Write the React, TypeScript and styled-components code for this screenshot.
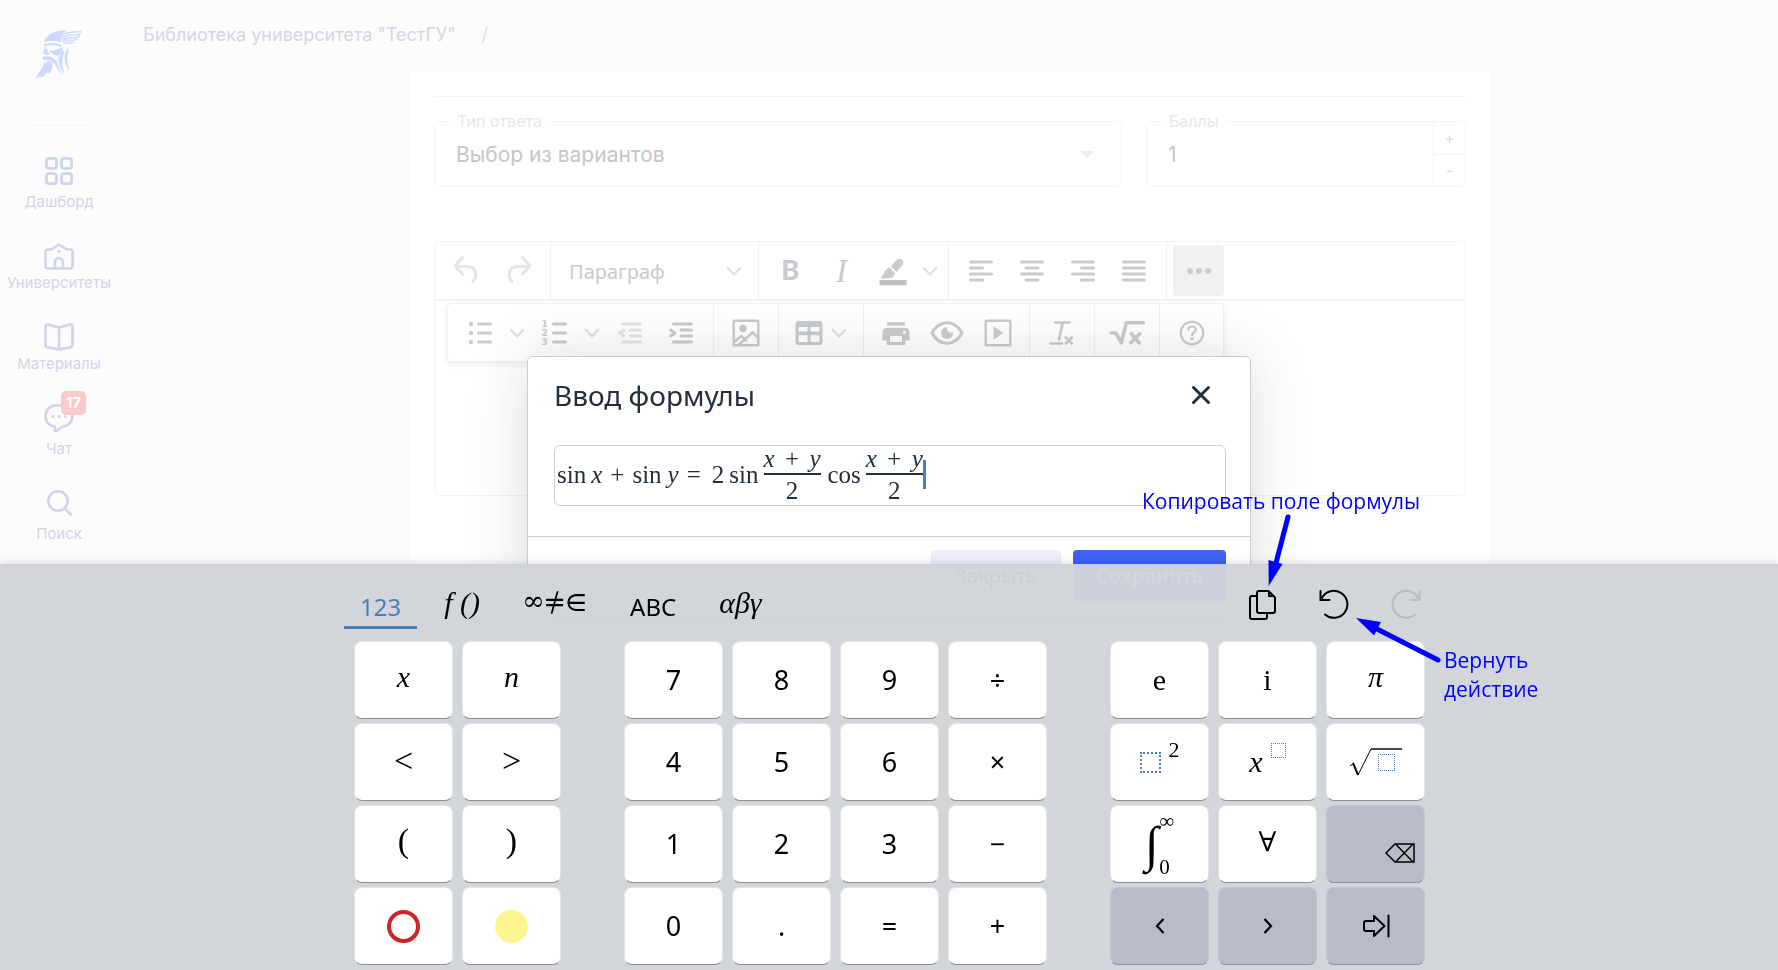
import React from 'react';
import styled, { createGlobalStyle, css } from 'styled-components';

const UI = `'Inter', 'Noto Sans', sans-serif`;
const TEXT = `'Noto Sans', 'Open Sans', sans-serif`;
const MATH = `'Liberation Serif', 'DejaVu Serif', serif`;

const Global = createGlobalStyle`
  *, *::before, *::after { box-sizing: border-box; }
  body { margin: 0; background: #fcfcfc; overflow: hidden; }
  button, select, input { font: inherit; color: inherit; border: 0; padding: 0; margin: 0; background: none; border-radius: 0; outline: none; }
`;

/* ---------- page ---------- */

const Shell = styled.div`
  display: flex;
  min-height: 100vh;
  font-family: ${UI};
`;

const Sidebar = styled.nav`
  flex: none;
  width: 118px;
  display: flex;
  flex-direction: column;
  align-items: center;
  padding-top: 29px;
`;

const LogoLink = styled.a`
  display: block;
  height: 50px;
`;

const SideRule = styled.div`
  width: 60px;
  height: 1px;
  margin: 46px 0 31px;
  background: #f4f5f7;
`;

const NavList = styled.div`
  display: flex;
  flex-direction: column;
  align-items: center;
  gap: 30px;
`;

const NavItem = styled.a<{ $tight?: boolean }>`
  position: relative;
  display: flex;
  flex-direction: column;
  align-items: center;
  gap: ${p => (p.$tight ? 3 : 7)}px;
  color: #ced5ea;
  font-size: 15px;
  line-height: 20px;
  text-decoration: none;
  svg { display: block; }
`;

const Badge = styled.span`
  position: absolute;
  top: -13px;
  left: calc(50% + 2px);
  width: 25px;
  height: 24px;
  border-radius: 5px;
  background: #fbcac8;
  color: #fff;
  font-size: 15px;
  font-weight: 700;
  line-height: 24px;
  text-align: center;
`;

const Main = styled.main`
  flex: 1;
  min-width: 0;
  display: flex;
  flex-direction: column;
  padding-left: 4px;
`;

const Crumbs = styled.div`
  display: flex;
  align-items: center;
  gap: 26px;
  height: 72px;
  padding: 0 0 4px 21px;
  font-size: 18px;
  color: #dddfe4;
  a { color: #cfd6ea; text-decoration: none; }
`;

const Panel = styled.section`
  flex: 1;
  width: 100%;
  max-width: 1082px;
  margin: 0 auto;
  padding: 24px;
  background: #fff;
  border: solid #fafafa;
  border-width: 0 1px;
`;

const PanelRule = styled.div`
  height: 1px;
  background: #f5f5f6;
`;

const FieldRow = styled.div`
  display: flex;
  gap: 24px;
  margin: 16px 0 54px;
`;

const Field = styled.fieldset<{ $fixed?: boolean }>`
  flex: ${p => (p.$fixed ? '0 0 320px' : '1')};
  min-width: 0;
  height: 74px;
  display: flex;
  margin: 0;
  padding: 0;
  border: 1px solid #f5f5f7;
  border-radius: 6px;
  color: #c6c6c8;
  font-size: 21px;
`;

const Legend = styled.legend`
  margin-left: 16px;
  padding: 0 8px 0 6px;
  color: #e7e7eb;
  font-size: 16px;
  line-height: 16px;
`;

const FieldInner = styled.div`
  flex: 1;
  display: flex;
  align-items: flex-start;
  min-width: 0;
`;

const FieldSelect = styled.select`
  flex: 1;
  height: 51px;
  padding-left: 21px;
  appearance: none;
`;

const FieldInput = styled.input`
  flex: 1;
  min-width: 0;
  height: 51px;
  padding-left: 21px;
`;

const DropMark = styled.span`
  margin: 22px 27px 0 0;
  border: 7px solid transparent;
  border-top: 7px solid #ececf1;
  border-bottom: 0;
`;

const Stepper = styled.div`
  display: flex;
  flex-direction: column;
  align-self: stretch;
  width: 32px;
  margin-top: -7px;
  border-left: 1px solid #f3f3f5;
  button { flex: 1; font-size: 16px; line-height: 20px; color: #dcdcdf; }
  button + button { border-top: 1px solid #f3f3f5; }
`;

/* ---------- editor ---------- */

const Editor = styled.div`
  height: 255px;
  border: 1px solid #f4f4f5;
  border-radius: 6px;
`;

const Toolbar = styled.div`
  display: flex;
  height: 59px;
  border-bottom: 2px solid #f1f2f2;
`;

const MoreToolbar = styled.div`
  display: flex;
  width: max-content;
  height: 59px;
  margin: 2px 0 0 12px;
  border: 1px solid #f1f1f2;
  border-radius: 4px;
  background: #fff;
  box-shadow: 0 3px 6px rgba(34, 47, 62, 0.08);
`;

const Group = styled.div<{ $wide?: boolean }>`
  display: flex;
  align-items: center;
  padding: 0 ${p => (p.$wide ? 7 : 6)}px 0 6px;
  border-right: 1px solid #eff0f1;
  &:first-child { padding: 0 7px 0 6px; }
  &:last-child { border-right: 0; }
`;

const Tool = styled.button<{ $faint?: boolean; $on?: boolean; $menu?: boolean }>`
  width: ${p => (p.$menu ? 72 : 51)}px;
  height: 51px;
  display: flex;
  align-items: center;
  justify-content: center;
  border-radius: 4px;
  color: ${p => (p.$faint ? '#e3e5e7' : '#c8cbcf')};
  ${p => p.$on && css`background: #f0f1f3;`}
  svg { display: block; flex: none; }
`;

const Drop = styled.button`
  width: 24px;
  height: 51px;
  display: flex;
  align-items: center;
  justify-content: center;
`;

const BoldMark = styled.b`
  font: 700 28px/36px 'Roboto', ${UI};
`;

const ItalicMark = styled.i`
  font: italic 400 33px/36px ${MATH};
`;

const BlockSelect = styled.label`
  display: flex;
  align-items: center;
  width: 195px;
  height: 51px;
  padding: 0 6px 0 12px;
  color: #c8cbcf;
  font: 400 20px/28px ${TEXT};
  select { flex: 1; min-width: 0; height: 51px; padding-top: 2px; appearance: none; }
`;

/* ---------- dialog ---------- */

const Backdrop = styled.div`
  position: fixed;
  inset: 0;
  display: flex;
  align-items: center;
  justify-content: center;
`;

const Dialog = styled.div`
  width: 724px;
  max-width: 95vw;
  border: 1px solid #ccc;
  border-radius: 5px;
  background: #fff;
  color: #222f3e;
  font-family: ${TEXT};
  box-shadow: 0 24px 24px -15px rgba(34, 47, 62, 0.15), 0 0 60px 1px rgba(34, 47, 62, 0.15);
`;

const DialogHead = styled.div`
  display: flex;
  align-items: center;
  justify-content: space-between;
  height: 88px;
  padding: 0 24px 12px 26px;
  h1 { margin: 0; font-size: 28px; font-weight: 400; line-height: 40px; }
`;

const CloseButton = styled.button`
  width: 51px;
  height: 51px;
  display: flex;
  align-items: center;
  justify-content: center;
`;

const FormulaField = styled.div`
  display: flex;
  align-items: center;
  height: 61px;
  margin: 0 24px 30px 26px;
  padding: 0 2px 2px;
  border: 1px solid #ccc;
  border-radius: 6px;
  font: 400 25px/28px ${MATH};
`;

const Term = styled.span<{ $before?: number }>`
  margin-left: ${p => p.$before ?? 0}px;
`;

const Fraction = styled.span`
  display: flex;
  flex-direction: column;
  width: 57px;
  margin-left: 5px;
`;

const Numerator = styled.span`
  display: flex;
  justify-content: space-between;
  height: 29px;
  line-height: 26px;
  border-bottom: 2px solid currentColor;
`;

const Denominator = styled.span`
  height: 28px;
  line-height: 32px;
  text-align: center;
`;

const Caret = styled.span`
  width: 3px;
  height: 29px;
  background: #4a7dbd;
`;

const DialogFoot = styled.div`
  display: flex;
  justify-content: flex-end;
  gap: 12px;
  padding: 13px 24px 12px;
  border-top: 1px solid #ccc;
`;

const FootButton = styled.button<{ $primary?: boolean }>`
  width: ${p => (p.$primary ? 153 : 130)}px;
  height: 51px;
  border-radius: 4px;
  font-size: 20px;
  font-weight: ${p => (p.$primary ? 600 : 400)};
  color: ${p => (p.$primary ? '#fff' : '#222f3e')};
  background: ${p => (p.$primary ? '#3e62f5' : '#ebf0fc')};
`;

/* ---------- math keyboard ---------- */

const Keyboard = styled.div`
  position: fixed;
  left: 0;
  right: 0;
  bottom: 0;
  padding-bottom: 5px;
  border-top: 1px solid #cbcdd0;
  background: rgba(208, 211, 217, 0.965);
  box-shadow: 0 0 10px rgba(0, 0, 0, 0.16);
  color: #000;
`;

const KeyboardBody = styled.div`
  position: relative;
  width: 1090px;
  margin: 0 auto;
`;

const KeyboardBar = styled.div`
  display: flex;
  justify-content: space-between;
  height: 64px;
  margin-bottom: 12px;
`;

const Tabs = styled.div`
  display: flex;
  gap: 11px;
`;

const Tab = styled.button<{ $active?: boolean; $math?: boolean }>`
  padding: ${p => (p.$math ? 20 : 24)}px 16px 0;
  display: flex;
  align-items: flex-start;
  justify-content: center;
  white-space: nowrap;
  font: ${p => (p.$math ? `italic 30px/36px ${MATH}` : `400 24px/36px ${TEXT}`)};
  color: ${p => (p.$active ? '#4a7dbd' : '#000')};
  border-bottom: 3px solid ${p => (p.$active ? '#4a7dbd' : 'transparent')};
`;

const Actions = styled.div`
  display: flex;
  gap: 42px;
  padding: 24px 13px 0 0;
`;

const Action = styled.button`
  width: 30px;
  height: 32px;
  &:disabled { color: #b9bcc1; }
  svg { display: block; }
`;

const Pad = styled.div`
  display: flex;
  gap: 63px;
  padding: 0 10px;
`;

const Block = styled.div<{ $cols: number }>`
  display: grid;
  grid-template-columns: repeat(${p => p.$cols}, 99px);
  grid-auto-rows: 78px;
  gap: 4px 9px;
`;

const Key = styled.button<{ $kind?: 'digit' | 'math' | 'action' }>`
  display: flex;
  align-items: center;
  justify-content: center;
  border: 1px solid #e4e6e9;
  border-bottom-color: #8b8d91;
  border-radius: 8px;
  background: #fff;
  font: ${p => (p.$kind === 'digit' ? `400 27px/40px ${TEXT}` : `400 30px/40px ${MATH}`)};
  ${p => p.$kind === 'math' && css`font-style: italic; padding-bottom: 6px;`}
  ${p => p.$kind === 'action' && css`background: #b8bcc8; border-color: #c0c4ce; border-bottom-color: #8e9199;`}
  svg { display: block; }
`;

const CornerKey = styled(Key)`
  align-items: flex-end;
  justify-content: flex-end;
  padding: 0 9px 19px;
`;

const Large = styled.span<{ $up?: boolean }>`
  padding-bottom: ${p => (p.$up ? 6 : 2)}px;
  font-size: 34px;
`;

const Symbol = styled.span`
  font: 400 27px/36px 'DejaVu Math TeX Gyre', 'DejaVu Sans', sans-serif;
`;

const Ring = styled.span`
  width: 33px;
  height: 33px;
  border: 4px solid #cc2428;
  border-radius: 50%;
`;

const Disc = styled.span`
  width: 33px;
  height: 33px;
  border-radius: 50%;
  background: #fff590;
`;

const Slot = styled.span<{ $size: number }>`
  display: block;
  width: ${p => p.$size}px;
  height: ${p => p.$size}px;
  border: ${p => (p.$size > 20 ? 2 : 1)}px dotted #4a7dbd;
`;

const Power = styled.span`
  display: flex;
  align-items: center;
  gap: 8px;
`;

const Raised = styled.span`
  padding-bottom: 24px;
  font-size: 22px;
  line-height: 20px;
`;

const Integral = styled.span`
  display: flex;
  align-items: center;
  font-size: 50px;
  line-height: 60px;
`;

const Limits = styled.span`
  display: flex;
  flex-direction: column;
  justify-content: space-between;
  height: 66px;
  margin-left: 1px;
  font-size: 21px;
  line-height: 20px;
  text-align: left;
`;

const Root = styled.span`
  position: relative;
  display: block;
  width: 52px;
  height: 28px;
  > span { position: absolute; left: 28px; top: 6px; }
`;

/* ---------- call-outs over the screen ---------- */

const Note = styled.p<{ $x: number; $y: number }>`
  position: absolute;
  left: ${p => p.$x}px;
  top: ${p => p.$y}px;
  margin: 0;
  color: #0000f5;
  font: 400 21px/29px 'Open Sans', ${TEXT};
  white-space: nowrap;
`;

const Arrows = styled.svg`
  position: absolute;
  left: 912px;
  top: -56px;
  pointer-events: none;
`;

/* ---------- icons ---------- */

const Icon = ({ children, size = 36, w = 2 }: { children: React.ReactNode; size?: number; w?: number }) => (
  <svg width={size} height={size} viewBox="0 0 24 24" fill="none" stroke="currentColor" strokeWidth={w} strokeLinecap="round" strokeLinejoin="round" aria-hidden="true">
    {children}
  </svg>
);

const Lines = ({ d }: { d: string }) => <Icon w={2}><path d={d} /></Icon>;

const Chevron = () => (
  <svg width="24" height="24" viewBox="0 0 24 24" fill="none" stroke="#dfe1e4" strokeWidth="2.4" strokeLinecap="round" strokeLinejoin="round" aria-hidden="true">
    <path d="M6 9l6 6.500L18 9" />
  </svg>
);

const Logo = () => (
  <svg width="48" height="50" viewBox="107 87 144 150" fill="#cdd8fd" aria-hidden="true">
    <path d="M134 127C140 103 166 90 207 91C190 97 183 110 185 127C168 121 150 122 134 127Z" />
    <path d="M134 133C150 127 172 127 187 135L186 142C168 134 151 134 134 139Z" />
    <path d="M136 139L134 152L131 160L138 164L146 166L152 161L144 155L146 148L141 147Z" />
    <path d="M149 151L164 152L190 142L187 158L177 169L160 163Z" />
    <path d="M130 170C150 165 168 172 175 191C179 205 182 214 186 224C172 204 164 184 148 180C140 178 132 182 130 177Z" />
    <path d="M134 187L139 192L143 183C152 182 161 188 160 200C158 210 154 217 151 223L146 216L131 230L109 233C119 217 131 205 134 187Z" />
    <path d="M191 150C173 172 179 204 196 223C188 199 186 178 196 156ZM206 144C190 164 194 194 210 212C203 190 202 170 207 152Z" />
    <path d="M174 172C176 190 181 210 189 237C187 210 182 192 181 168Z" opacity=".4" />
    <path fill="none" stroke="#cdd8fd" strokeWidth="4" strokeLinecap="round" d="M201 131C186 128 185 104 203 99C220 93 234 99 247 93M196 120C194 106 210 104 220 105C231 107 240 103 246 99M200 126C199 113 210 112 219 113C229 115 236 112 241 107M207 130C203 122 211 120 217 121C224 122 229 120 233 116M208 130L224 127" />
  </svg>
);

const MenuDrop = ({ label }: { label: string }) => <Drop aria-label={label}><Chevron /></Drop>;

const Grid4 = () => (
  <Icon size={28} w={2.4}>
    <rect x="1.200" y="1.200" width="8.600" height="8.600" rx="2" /><rect x="14.200" y="1.200" width="8.600" height="8.600" rx="2" />
    <rect x="1.200" y="14.200" width="8.600" height="8.600" rx="2" /><rect x="14.200" y="14.200" width="8.600" height="8.600" rx="2" />
  </Icon>
);

const SideSvg = ({ children }: { children: React.ReactNode }) => (
  <svg width="30" height="28" viewBox="0 0 30 28" fill="none" stroke="currentColor" strokeWidth="2.6" strokeLinecap="round" strokeLinejoin="round" aria-hidden="true">{children}</svg>
);

const House = () => (
  <SideSvg>
    <path d="M15 2.500L23 7.500H26C27.500 7.500 28.500 8.500 28.500 10V24C28.500 25.500 27.500 26.500 26 26.500H4C2.500 26.500 1.500 25.500 1.500 24V10C1.500 8.500 2.500 7.500 4 7.500H7Z" />
    <path d="M11 26V20C11 15 19 15 19 20V26M14.500 9.500H15.500" />
  </SideSvg>
);

const Book = () => (
  <SideSvg>
    <path d="M15 4.500L4 1.500C2.500 1.300 1.500 2 1.500 3.500V22C1.500 23.500 2 24 3.500 24.300L15 26.500L26.500 24.300C28 24 28.500 23.500 28.500 22V3.500C28.500 2 27.500 1.300 26 1.500ZM15 4.500V26" />
  </SideSvg>
);

const Chat = () => (
  <SideSvg>
    <path d="M12 1.500H18C24 1.500 28.500 6 28.500 12C28.500 18 24 22 19 22.500L11 28V22.500C5.500 22 1.500 18 1.500 12C1.500 6 6 1.500 12 1.500Z" />
    <path d="M8.800 12.500h.1M15 12.500h.1M21.200 12.500h.1" strokeWidth="3" />
  </SideSvg>
);

const Search = () => (
  <SideSvg><circle cx="14" cy="12" r="9.700" /><path d="M21 19.500L26.500 25.500" /></SideSvg>
);

const Undo = () => <Icon><path d="M9 3L4 8.500L9 14M4.500 9H12C18 9 19.500 15 16 19" /></Icon>;
const Redo = () => <Icon><path d="M15 3L20 8.500L15 14M19.500 9H12C6 9 4.500 15 8 19" /></Icon>;

const Dot = ({ y }: { y: number }) => <circle cx="6" cy={y} r="1.500" fill="currentColor" stroke="none" />;

const ListDigits = styled.g`
  font: 700 6px 'DejaVu Sans', sans-serif;
  fill: currentColor;
  stroke: none;
`;

const XPlusY = () => (
  <Fraction>
    <Numerator><i>x</i><span>+</span><i>y</i></Numerator>
    <Denominator>2</Denominator>
  </Fraction>
);

const nav = [
  { label: 'Дашборд', icon: <Grid4 /> },
  { label: 'Университеты', icon: <House />, tight: true },
  { label: 'Материалы', icon: <Book />, tight: true },
  { label: 'Чат', icon: <Chat />, badge: '17' },
  { label: 'Поиск', icon: <Search /> },
];

const digits = ['7', '8', '9', '÷', '4', '5', '6', '×', '1', '2', '3', '−', '0', '.', '=', '+'];

export default function App() {
  return (
    <>
      <Global />
      <Shell>
        <Sidebar>
          <LogoLink href="#" aria-label="Главная"><Logo /></LogoLink>
          <SideRule />
          <NavList>
            {nav.map(n => (
              <NavItem key={n.label} href="#" $tight={n.tight}>
                {n.icon}
                {n.badge && <Badge>{n.badge}</Badge>}
                <span>{n.label}</span>
              </NavItem>
            ))}
          </NavList>
        </Sidebar>
        <Main>
          <Crumbs><a href="#">Библиотека университета "ТестГУ"</a><span>/</span></Crumbs>
          <Panel>
            <PanelRule />
            <FieldRow>
              <Field>
                <Legend><label htmlFor="kind">Тип ответа</label></Legend>
                <FieldInner>
                  <FieldSelect id="kind"><option>Выбор из вариантов</option></FieldSelect>
                  <DropMark />
                </FieldInner>
              </Field>
              <Field $fixed>
                <Legend><label htmlFor="score">Баллы</label></Legend>
                <FieldInner>
                  <FieldInput id="score" defaultValue="1" />
                  <Stepper><button aria-label="Больше">+</button><button aria-label="Меньше">-</button></Stepper>
                </FieldInner>
              </Field>
            </FieldRow>
            <Editor>
              <Toolbar>
                <Group>
                  <Tool $faint aria-label="Отменить"><Undo /></Tool>
                  <Tool $faint aria-label="Повторить"><Redo /></Tool>
                </Group>
                <Group>
                  <BlockSelect>
                    <select aria-label="Формат"><option>Параграф</option></select>
                    <Chevron />
                  </BlockSelect>
                </Group>
                <Group>
                  <Tool aria-label="Полужирный"><BoldMark>B</BoldMark></Tool>
                  <Tool aria-label="Курсив"><ItalicMark>I</ItalicMark></Tool>
                  <Tool aria-label="Цвет фона">
                    <Icon>
                      <path stroke="none" fill="#bfbfbf" d="M3 18h18v3.500H3z" />
                      <path stroke="none" fill="currentColor" d="M4 17L6 13.500C6.200 11.800 7 11.500 9.500 9.500L13.500 13.500L11.500 16.500L8.500 17ZM10.500 8.800L14.500 4.500C17 2.500 20 5 18.300 8L14.300 12.600Z" />
                    </Icon>
                  </Tool>
                  <MenuDrop label="Выбор цвета" />
                </Group>
                <Group $wide>
                  <Tool aria-label="По левому краю"><Lines d="M5 6h14M5 10h8M5 14h14M5 18h8" /></Tool>
                  <Tool aria-label="По центру"><Lines d="M5 6h14M8 10h8M5 14h14M8 18h8" /></Tool>
                  <Tool aria-label="По правому краю"><Lines d="M5 6h14M11 10h8M5 14h14M11 18h8" /></Tool>
                  <Tool aria-label="По ширине"><Lines d="M5 6h14M5 10h14M5 14h14M5 18h14" /></Tool>
                </Group>
                <Group>
                  <Tool $on aria-label="Ещё">
                    <Icon><g stroke="none" fill="currentColor"><circle cx="6" cy="12" r="2" /><circle cx="12" cy="12" r="2" /><circle cx="18" cy="12" r="2" /></g></Icon>
                  </Tool>
                </Group>
              </Toolbar>
              <MoreToolbar>
                <Group>
                  <Tool aria-label="Маркированный список"><Icon><Dot y={6} /><Dot y={12} /><Dot y={18} /><path d="M11 6h8M11 12h8M11 18h8" /></Icon></Tool>
                  <MenuDrop label="Вид маркеров" />
                  <Tool aria-label="Нумерованный список">
                    <Icon>
                      <path d="M11 6h8M11 12h8M11 18h8" />
                      <ListDigits><text x="3" y="8">1</text><text x="3" y="14">2</text><text x="3" y="20">3</text></ListDigits>
                    </Icon>
                  </Tool>
                  <MenuDrop label="Вид нумерации" />
                  <Tool $faint aria-label="Уменьшить отступ"><Lines d="M7 6h12M12 10h7M12 14h7M7 18h12M8 10L5 12l3 2" /></Tool>
                  <Tool aria-label="Увеличить отступ"><Lines d="M7 6h12M12 10h7M12 14h7M7 18h12M5 10l3 2-3 2" /></Tool>
                </Group>
                <Group $wide>
                  <Tool aria-label="Изображение">
                    <Icon w={1.6}><rect x="3.800" y="3.800" width="16.400" height="16.400" rx=".3" /><circle cx="10" cy="9" r="1.700" fill="currentColor" /><path d="M4 18l5-4 3 3M7 20l9.500-8.500 3.500 4" /></Icon>
                  </Tool>
                </Group>
                <Group>
                  <Tool $menu aria-label="Таблица">
                    <Icon><path stroke="none" fill="currentColor" fillRule="evenodd" d="M5 4h14a2 2 0 0 1 2 2v12a2 2 0 0 1-2 2H5a2 2 0 0 1-2-2V6a2 2 0 0 1 2-2ZM5 8v3h6V8ZM13 8v3h6V8ZM5 13.500V18h6v-4.500ZM13 13.500V18h6v-4.500Z" /></Icon>
                    <Chevron />
                  </Tool>
                </Group>
                <Group>
                  <Tool aria-label="Печать">
                    <Icon><path stroke="none" fill="currentColor" fillRule="evenodd" d="M6 4.800h12V7H6ZM6 8.500h12a3 3 0 0 1 3 3V17h-3v3H6v-3H3v-5.500a3 3 0 0 1 3-3ZM8 14v4h8v-4ZM17.500 10.500a1 1 0 1 0 .1 2.200a1 1 0 1 0-.1-2.200Z" /></Icon>
                  </Tool>
                  <Tool aria-label="Просмотр">
                    <Icon><path d="M2 12C7 2.800 17 2.800 22 12C17 21.200 7 21.200 2 12Z" /><path stroke="none" fill="currentColor" d="M12 8C11.500 10.500 13.500 12.300 16 11.500A4 4 0 1 1 12 8Z" /></Icon>
                  </Tool>
                  <Tool aria-label="Медиа">
                    <Icon w={1.6}><rect x="3.800" y="3.800" width="16.400" height="16.400" rx=".3" /><path stroke="none" fill="currentColor" d="M9 7.500l6.500 4.500L9 16.500Z" /></Icon>
                  </Tool>
                </Group>
                <Group $wide>
                  <Tool aria-label="Очистить формат"><Icon w={1.800}><path d="M7.500 5h9.500M12.500 5L10 16.500M4.500 19h7.500M14.500 15l4 4M18.500 15l-4 4" /></Icon></Tool>
                </Group>
                <Group $wide>
                  <Tool aria-label="Формула"><Icon w={2.400}><path d="M1.500 12H4.500L8.200 18.500L11.500 5.200H23M15 12.500l5 6M20.500 12.500l-6 6" /></Icon></Tool>
                </Group>
                <Group>
                  <Tool aria-label="Справка"><Icon w={1.400}><circle cx="12" cy="12" r="7.500" /><path d="M9.500 9.800C9.800 6.800 14.500 7 14.500 9.800C14.500 11.800 12 11.500 12 13.500" /><circle cx="12" cy="16" r=".5" /></Icon></Tool>
                </Group>
              </MoreToolbar>
            </Editor>
          </Panel>
        </Main>
      </Shell>

      <Backdrop>
        <Dialog role="dialog" aria-labelledby="dialog-title">
          <DialogHead>
            <h1 id="dialog-title">Ввод формулы</h1>
            <CloseButton aria-label="Закрыть окно"><Icon w={2}><path d="M7 7l10 10M17 7L7 17" /></Icon></CloseButton>
          </DialogHead>
          <FormulaField role="math">
            <Term>sin</Term><Term $before={5}><i>x</i></Term><Term $before={8}>+</Term><Term $before={8}>sin</Term>
            <Term $before={6}><i>y</i></Term><Term $before={8}>=</Term><Term $before={11}>2</Term><Term $before={5}>sin</Term>
            <XPlusY />
            <Term $before={7}>cos</Term>
            <XPlusY />
            <Caret />
          </FormulaField>
          <DialogFoot>
            <FootButton>Закрыть</FootButton>
            <FootButton $primary>Сохранить</FootButton>
          </DialogFoot>
        </Dialog>
      </Backdrop>

      <Keyboard>
        <KeyboardBody>
          <KeyboardBar>
            <Tabs>
              <Tab $active>123</Tab>
              <Tab $math>f ()</Tab>
              <Tab $math><Symbol>∞≠∈</Symbol></Tab>
              <Tab>ABC</Tab>
              <Tab $math>αβγ</Tab>
            </Tabs>
            <Actions>
              <Action aria-label="Копировать">
                <svg width="30" height="32" viewBox="0 0 30 32" fill="none" stroke="currentColor" strokeWidth="2" strokeLinejoin="round">
                  <path d="M12 2H21.500L28 8.500V22A2 2 0 0 1 26 24H12A2 2 0 0 1 10 22V4A2 2 0 0 1 12 2ZM22 2V7H27.500M10 7H5A2 2 0 0 0 3 9V28A2 2 0 0 0 5 30H18A2 2 0 0 0 20 28V24" />
                </svg>
              </Action>
              <Action aria-label="Вернуть">
                <svg width="30" height="32" viewBox="0 0 30 32" fill="none" stroke="currentColor" strokeWidth="2" strokeLinecap="round">
                  <path d="M1.500 2V11H10.500M2.500 10A13.500 13.500 0 1 1 6 25.500" />
                </svg>
              </Action>
              <Action aria-label="Повторить" disabled>
                <svg width="30" height="32" viewBox="0 0 30 32" fill="none" stroke="currentColor" strokeWidth="2" strokeLinecap="round">
                  <path d="M28.500 2V11H19.500M27.500 10A13.500 13.500 0 1 0 24 25.500" />
                </svg>
              </Action>
            </Actions>
          </KeyboardBar>
          <Pad>
            <Block $cols={2}>
              <Key $kind="math">x</Key><Key $kind="math">n</Key>
              <Key><Large>&lt;</Large></Key><Key><Large>&gt;</Large></Key>
              <Key><Large $up>(</Large></Key><Key><Large $up>)</Large></Key>
              <Key aria-label="Цвет контура"><Ring /></Key><Key aria-label="Цвет фона"><Disc /></Key>
            </Block>
            <Block $cols={4}>
              {digits.map(d => <Key key={d} $kind="digit">{d}</Key>)}
            </Block>
            <Block $cols={3}>
              <Key>e</Key><Key>i</Key><Key $kind="math">π</Key>
              <Key><Power><Slot $size={21} /><Raised>2</Raised></Power></Key>
              <Key><Power><i>x</i><Raised><Slot $size={15} /></Raised></Power></Key>
              <Key aria-label="Корень">
                <Root>
                  <svg width="52" height="28" viewBox="0 0 52 28" fill="none" stroke="#000" strokeLinejoin="miter">
                    <path d="M0 18L4 15" strokeWidth="1" /><path d="M3 15L8 27" strokeWidth="2" /><path d="M8 27L21 1" strokeWidth="1" /><path d="M21 1H52" strokeWidth="1.400" />
                  </svg>
                  <Slot $size={17} />
                </Root>
              </Key>
              <Key><Integral><span>∫</span><Limits><span>∞</span><span>0</span></Limits></Integral></Key>
              <Key><Symbol>∀</Symbol></Key>
              <CornerKey $kind="action" aria-label="Удалить">
                <svg width="30" height="20" viewBox="0 0 30 20" fill="none" stroke="#000" strokeWidth="1.500"><path d="M1 10L10 1H29V19H10ZM11 1.500L27.500 18.500M27.500 1.500L11 18.500" /></svg>
              </CornerKey>
              <Key $kind="action" aria-label="Влево">
                <svg width="10" height="16" viewBox="0 0 10 16" fill="none" stroke="#000" strokeWidth="2.200"><path d="M8.500 1L2 8L8.500 15" /></svg>
              </Key>
              <Key $kind="action" aria-label="Вправо">
                <svg width="10" height="16" viewBox="0 0 10 16" fill="none" stroke="#000" strokeWidth="2.200"><path d="M1.500 1L8 8L1.500 15" /></svg>
              </Key>
              <Key $kind="action" aria-label="Далее">
                <svg width="28" height="24" viewBox="0 0 28 24" fill="none" stroke="#000" strokeWidth="2" strokeLinejoin="round" strokeLinecap="round"><path d="M12 2L22.500 12L12 22V17H4C2 17 2 16 2 15V9C2 8 2 7 4 7H12ZM26.500 1.500V22.500" /></svg>
              </Key>
            </Block>
          </Pad>
          <Note $x={798} $y={-78}>Копировать поле формулы</Note>
          <Note $x={1100} $y={81}>Вернуть<br />действие</Note>
          <Arrows width="190" height="160" viewBox="1256 509 190 160" fill="#0000ff" aria-hidden="true">
            <path d="M1288 517L1276 563M1438 660L1377 629" stroke="#0000ff" strokeWidth="5" strokeLinecap="round" />
            <path d="M1268.500 560L1282.500 564L1268.700 586ZM1356 618L1381 622L1374 635.500Z" />
          </Arrows>
        </KeyboardBody>
      </Keyboard>
    </>
  );
}
